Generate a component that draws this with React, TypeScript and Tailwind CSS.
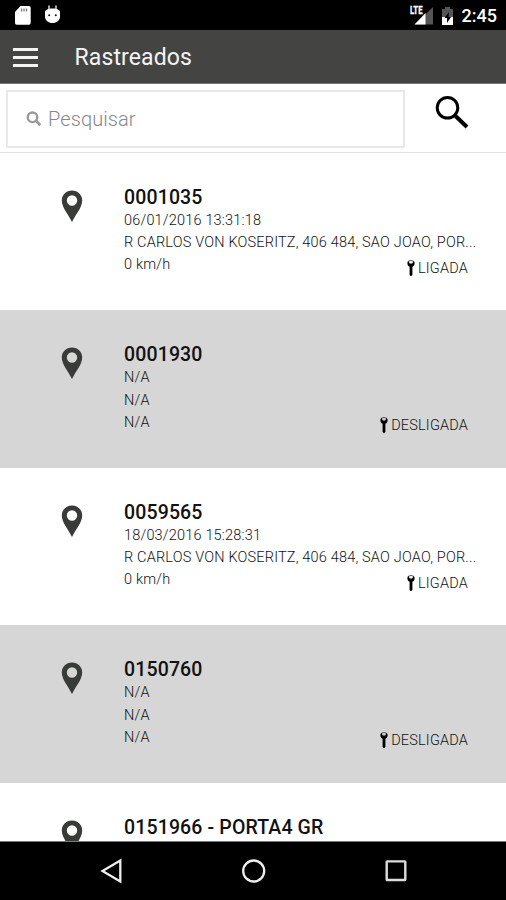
type Vehicle = {
  id: string;
  lines: string[];
  status?: string;
};

const vehicles: Vehicle[] = [
  { id: "0001035", lines: ["06/01/2016 13:31:18", "R CARLOS VON KOSERITZ, 406 484, SAO JOAO, POR...", "0 km/h"], status: "LIGADA" },
  { id: "0001930", lines: ["N/A", "N/A", "N/A"], status: "DESLIGADA" },
  { id: "0059565", lines: ["18/03/2016 15:28:31", "R CARLOS VON KOSERITZ, 406 484, SAO JOAO, POR...", "0 km/h"], status: "LIGADA" },
  { id: "0150760", lines: ["N/A", "N/A", "N/A"], status: "DESLIGADA" },
  { id: "0151966 - PORTA4 GR", lines: [] },
];

function StatusBar() {
  return (
    <div className="flex h-[30px] shrink-0 items-center bg-black pl-[14px] pr-[9px] text-white">
      <svg width="18" height="22" viewBox="0 0 18 22">
        <path d="M6.500 2H15a1.700 1.700 0 0 1 1.700 1.700V19a1.700 1.700 0 0 1-1.700 1.700H2.700A1.700 1.700 0 0 1 1 19V8z" fill="#fff" />
        <path d="M7.500 4.500v3M10 4.500v3M12.500 4.500v3" stroke="#777" strokeWidth="1.300" />
      </svg>
      <svg className="ml-[12px]" width="18" height="22" viewBox="0 0 18 22">
        <path d="M5 5.500V1.500M12 5.500V1.500" stroke="#ddd" strokeWidth="1.500" />
        <path d="M1 8.500C1 5.500 4 4.500 8.500 4.500S16 5.500 16 8.500v4C16 16.500 12.500 19 8.500 19S1 16.500 1 12.500z" fill="#fff" />
        <circle cx="5.200" cy="11.200" r="1" fill="#111" />
        <circle cx="11.800" cy="11.200" r="1" fill="#111" />
      </svg>
      <div className="flex-1" />
      <svg width="26" height="22" viewBox="0 0 26 22">
        <path d="M23 3v17.500H5z" fill="#555" />
        <path d="M0 0h14v11.500H0z" fill="#000" />
        <path d="M15.500 9v11.500H4.500z" fill="#fff" />
        <text x="0" y="10.200" fill="#fff" stroke="#fff" strokeWidth=".3" fontSize="10.500" fontWeight="700" textLength="12.500" lengthAdjust="spacingAndGlyphs">LTE</text>
      </svg>
      <svg className="ml-[5px] mr-[1px] mt-[1px]" width="13" height="20" viewBox="0 0 13 20">
        <path d="M4 1h5v2h3v16H1V3h3z" fill="#555" />
        <path d="M1 11h11v8H1z" fill="#fff" />
        <path d="M8 6 3.500 12H6v5l4-6H7.500z" fill="#000" />
      </svg>
      <span className="ml-[7px] mt-[1px] text-[18px] leading-none font-medium">2:45</span>
    </div>
  );
}

function Header() {
  return (
    <header className="flex h-[54px] shrink-0 items-center border-b border-[#777875] bg-[#444542] pl-[13px]">
      <div className="mt-[1px] flex w-[25px] flex-col gap-[5px]">
        <span className="h-[3px] bg-[#f4f4f4]" />
        <span className="h-[3px] bg-[#f4f4f4]" />
        <span className="h-[3px] bg-[#f4f4f4]" />
      </div>
      <h1 className="ml-[36.500px] mt-[1px] text-[23px] leading-none tracking-[0.12px] text-[#f4f4f4]">Rastreados</h1>
    </header>
  );
}

function SearchBar() {
  return (
    <div className="flex h-[68.800px] shrink-0 items-start border-b border-[#e2e2e2] pl-[6px] pt-[6px]">
      <div className="flex h-[58px] w-[399px] items-center border-2 border-[#e9e9e9] pl-[18px]">
        <svg width="16" height="16" viewBox="0 0 16 16" fill="none" stroke="#999">
          <circle cx="6.500" cy="6.300" r="4.800" strokeWidth="2.300" />
          <path d="m10 9.900 4.300 4.300" strokeWidth="2.700" />
        </svg>
        <span className="-mt-[1px] ml-[6px] text-[20px] leading-none font-light tracking-[0.08px] text-[#888]">Pesquisar</span>
      </div>
      <svg className="ml-[30px] mt-[4px]" width="36" height="36" viewBox="0 0 36 36" fill="none" stroke="#000">
        <circle cx="12.500" cy="13.800" r="10.300" strokeWidth="3" />
        <path d="m20.500 22 11.500 11" strokeWidth="4" />
      </svg>
    </div>
  );
}

function Pin() {
  return (
    <svg className="ml-[61px] mt-[37px] shrink-0" width="22" height="34" viewBox="0 0 22 34">
      <path
        fillRule="evenodd"
        d="M11 .5C5 .5.800 5 .8 10.500c0 7 6 13 10.200 21.500C15.200 23.500 21.200 17.500 21.200 10.500 21.200 5 17 .5 11 .5zM11 5.300a5.200 5.200 0 1 1 0 10.400 5.200 5.200 0 0 1 0-10.400z"
        fill="#393b38"
      />
    </svg>
  );
}

function KeyIcon() {
  return (
    <svg width="8" height="17" viewBox="0 0 8 17">
      <path d="M1.500.8C.7 1.500.4 2.300.4 3.300c0 1.700.9 2.900 2.200 3.500V15l1.400 1.300L5.400 15V6.800c1.300-.6 2.200-1.800 2.200-3.500 0-1-.3-1.800-1.100-2.500L5.300 3.600H2.700z" fill="#000" />
      <path d="M1.500 1.200Q4-.2 6.500 1.200" fill="none" stroke="#444" strokeWidth=".9" />
    </svg>
  );
}

function Row({ vehicle }: { vehicle: Vehicle }) {
  return (
    <li className="flex h-[157.500px] shrink-0 odd:bg-white even:bg-[#d6d6d6]">
      <Pin />
      <div className="ml-[41px] flex w-[360px] flex-col pt-[34px]">
        <h2 className="text-[19.500px] leading-[22px] font-medium tracking-[0.14px] whitespace-nowrap text-[#111]">{vehicle.id}</h2>
        <div className="mt-[1px] text-[14.500px] font-light tracking-[0.18px] text-[#111]">
          {vehicle.lines.map((line, i) => (
            <div key={i} className="h-[22.300px] leading-[22px] whitespace-nowrap">
              {line}
            </div>
          ))}
        </div>
        {vehicle.status && (
          <div className="-mt-[17px] mr-[16px] flex items-center justify-end gap-[3px] text-[14.500px] leading-[17px] font-light tracking-[0.18px] text-[#111]">
            <KeyIcon />
            <span>{vehicle.status}</span>
          </div>
        )}
      </div>
    </li>
  );
}

function NavBar() {
  return (
    <nav className="flex h-[59px] shrink-0 items-center border-t border-[#777] bg-black pl-[99px]">
      <svg width="24" height="26" viewBox="0 0 24 26" fill="none" stroke="#eee" strokeWidth="2.300">
        <path d="M21.300 2.500v21L3.500 13z" />
      </svg>
      <svg className="ml-[118px]" width="26" height="26" viewBox="0 0 26 26" fill="none" stroke="#eee" strokeWidth="2.300">
        <circle cx="12.700" cy="13" r="10.500" />
      </svg>
      <svg className="ml-[117px]" width="24" height="24" viewBox="0 0 24 24" fill="none" stroke="#ddd" strokeWidth="2.400">
        <rect x="2.700" y="2.400" width="18.600" height="18.600" rx=".5" />
      </svg>
    </nav>
  );
}

export default function App() {
  return (
    <div className="flex h-[900px] w-[506px] flex-col overflow-hidden bg-white font-['Roboto',sans-serif]">
      <StatusBar />
      <Header />
      <SearchBar />
      <ul className="flex min-h-0 flex-1 flex-col overflow-hidden">
        {vehicles.map((v) => (
          <Row key={v.id} vehicle={v} />
        ))}
      </ul>
      <NavBar />
    </div>
  );
}
